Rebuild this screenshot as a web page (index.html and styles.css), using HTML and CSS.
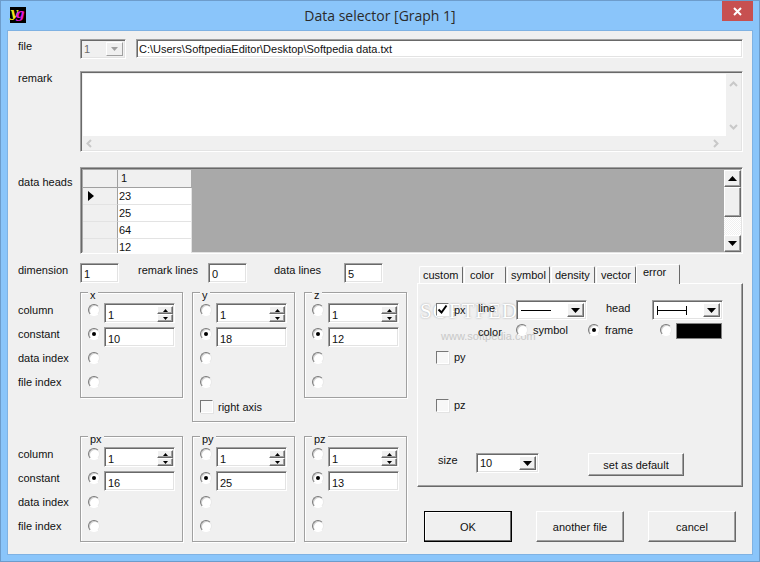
FILE: index.html
```html
<!DOCTYPE html>
<html lang="en">
<head>
<meta charset="utf-8">
<title>Data selector [Graph 1]</title>
<link rel="stylesheet" href="styles.css">
</head>
<body>
<div class="window">
  <header class="titlebar">
    <div class="logo"><span class="logo-y">y</span><span class="logo-g">g</span></div>
    <div class="title">Data selector [Graph 1]</div>
    <div class="close"><svg width="11" height="11" viewBox="0 0 11 11"><path d="M2 2l7 7M9 2l-7 7" stroke="#fff" stroke-width="2" fill="none"/></svg></div>
  </header>
  <main class="client">
    <div class="row row-file">
      <div class="label">file</div>
      <div class="sunken combo combo-file disabled">
        <span class="combo-text">1</span>
        <span class="combo-btn combo-btn-off"><svg width="8" height="5" viewBox="0 0 8 5"><path d="M0 0h7L3.500 4z" fill="#a0a0a0"/></svg></span>
      </div>
      <div class="sunken edit edit-path">C:\Users\SoftpediaEditor\Desktop\Softpedia data.txt</div>
    </div>

    <div class="row row-remark">
      <div class="label">remark</div>
      <div class="sunken memo">
        <div class="memo-text"></div>
        <div class="memo-vbar">
          <svg width="9" height="6" viewBox="0 0 9 6"><path d="M1 5l3.500-3.500L8 5" stroke="#c8c8c8" stroke-width="2" fill="none"/></svg>
          <svg width="9" height="6" viewBox="0 0 9 6"><path d="M1 1l3.500 3.500L8 1" stroke="#c8c8c8" stroke-width="2" fill="none"/></svg>
        </div>
        <div class="memo-hbar">
          <svg width="6" height="9" viewBox="0 0 6 9"><path d="M5 1L1.500 4.500 5 8" stroke="#c8c8c8" stroke-width="2" fill="none"/></svg>
          <svg width="6" height="9" viewBox="0 0 6 9"><path d="M1 1l3.500 3.500L1 8" stroke="#c8c8c8" stroke-width="2" fill="none"/></svg>
        </div>
      </div>
    </div>

    <div class="row row-heads">
      <div class="label">data heads</div>
      <div class="sunken datagrid">
        <div class="grid-table">
          <div class="grid-row grid-head"><div class="g-fixed"></div><div class="g-col g-col-head">1</div></div>
          <div class="grid-row"><div class="g-fixed"><svg width="7" height="10" viewBox="0 0 7 10"><path d="M0 0l6 5-6 5z" fill="#000"/></svg></div><div class="g-col">23</div></div>
          <div class="grid-row"><div class="g-fixed"></div><div class="g-col">25</div></div>
          <div class="grid-row"><div class="g-fixed"></div><div class="g-col">64</div></div>
          <div class="grid-row"><div class="g-fixed"></div><div class="g-col">12</div></div>
        </div>
        <div class="grid-empty"></div>
        <div class="grid-scroll">
          <div class="raised sb-btn"><svg width="9" height="5" viewBox="0 0 9 5"><path d="M4.500 0L9 5H0z" fill="#000"/></svg></div>
          <div class="raised sb-thumb"></div>
          <div class="sb-track"></div>
          <div class="raised sb-btn"><svg width="9" height="5" viewBox="0 0 9 5"><path d="M0 0h9L4.500 5z" fill="#000"/></svg></div>
        </div>
      </div>
    </div>

    <div class="lower">
      <div class="left">
        <div class="counts">
          <div class="label">dimension</div>
          <div class="sunken edit edit-count">1</div>
          <div class="count-label count-remark">remark lines</div>
          <div class="sunken edit edit-count">0</div>
          <div class="count-label count-data">data lines</div>
          <div class="sunken edit edit-count">5</div>
        </div>

        <div class="axes axes-main">
          <div class="axis-labels">
            <div>column</div><div>constant</div><div>data index</div><div>file index</div>
          </div>
          <section class="group">
            <div class="legend">x</div>
            <div class="g-row"><span class="radio"></span><div class="sunken edit spin"><span class="spin-val">1</span><span class="spin-btns"><span class="raised spin-b"><svg width="5" height="3" viewBox="0 0 5 3"><path d="M2.500 0L5 3H0z"/></svg></span><span class="raised spin-b"><svg width="5" height="3" viewBox="0 0 5 3"><path d="M0 0h5L2.500 3z"/></svg></span></span></div></div>
            <div class="g-row"><span class="radio on"></span><div class="sunken edit spin">10</div></div>
            <div class="g-row"><span class="radio"></span></div>
            <div class="g-row"><span class="radio"></span></div>
          </section>
          <section class="group group-tall">
            <div class="legend">y</div>
            <div class="g-row"><span class="radio"></span><div class="sunken edit spin"><span class="spin-val">1</span><span class="spin-btns"><span class="raised spin-b"><svg width="5" height="3" viewBox="0 0 5 3"><path d="M2.500 0L5 3H0z"/></svg></span><span class="raised spin-b"><svg width="5" height="3" viewBox="0 0 5 3"><path d="M0 0h5L2.500 3z"/></svg></span></span></div></div>
            <div class="g-row"><span class="radio on"></span><div class="sunken edit spin">18</div></div>
            <div class="g-row"><span class="radio"></span></div>
            <div class="g-row"><span class="radio"></span></div>
            <div class="g-row"><span class="check"></span><span class="check-text">right axis</span></div>
          </section>
          <section class="group">
            <div class="legend">z</div>
            <div class="g-row"><span class="radio"></span><div class="sunken edit spin"><span class="spin-val">1</span><span class="spin-btns"><span class="raised spin-b"><svg width="5" height="3" viewBox="0 0 5 3"><path d="M2.500 0L5 3H0z"/></svg></span><span class="raised spin-b"><svg width="5" height="3" viewBox="0 0 5 3"><path d="M0 0h5L2.500 3z"/></svg></span></span></div></div>
            <div class="g-row"><span class="radio on"></span><div class="sunken edit spin">12</div></div>
            <div class="g-row"><span class="radio"></span></div>
            <div class="g-row"><span class="radio"></span></div>
          </section>
        </div>

        <div class="axes axes-err">
          <div class="axis-labels">
            <div>column</div><div>constant</div><div>data index</div><div>file index</div>
          </div>
          <section class="group">
            <div class="legend">px</div>
            <div class="g-row"><span class="radio"></span><div class="sunken edit spin"><span class="spin-val">1</span><span class="spin-btns"><span class="raised spin-b"><svg width="5" height="3" viewBox="0 0 5 3"><path d="M2.500 0L5 3H0z"/></svg></span><span class="raised spin-b"><svg width="5" height="3" viewBox="0 0 5 3"><path d="M0 0h5L2.500 3z"/></svg></span></span></div></div>
            <div class="g-row"><span class="radio on"></span><div class="sunken edit spin">16</div></div>
            <div class="g-row"><span class="radio"></span></div>
            <div class="g-row"><span class="radio"></span></div>
          </section>
          <section class="group">
            <div class="legend">py</div>
            <div class="g-row"><span class="radio"></span><div class="sunken edit spin"><span class="spin-val">1</span><span class="spin-btns"><span class="raised spin-b"><svg width="5" height="3" viewBox="0 0 5 3"><path d="M2.500 0L5 3H0z"/></svg></span><span class="raised spin-b"><svg width="5" height="3" viewBox="0 0 5 3"><path d="M0 0h5L2.500 3z"/></svg></span></span></div></div>
            <div class="g-row"><span class="radio on"></span><div class="sunken edit spin">25</div></div>
            <div class="g-row"><span class="radio"></span></div>
            <div class="g-row"><span class="radio"></span></div>
          </section>
          <section class="group">
            <div class="legend">pz</div>
            <div class="g-row"><span class="radio"></span><div class="sunken edit spin"><span class="spin-val">1</span><span class="spin-btns"><span class="raised spin-b"><svg width="5" height="3" viewBox="0 0 5 3"><path d="M2.500 0L5 3H0z"/></svg></span><span class="raised spin-b"><svg width="5" height="3" viewBox="0 0 5 3"><path d="M0 0h5L2.500 3z"/></svg></span></span></div></div>
            <div class="g-row"><span class="radio on"></span><div class="sunken edit spin">13</div></div>
            <div class="g-row"><span class="radio"></span></div>
            <div class="g-row"><span class="radio"></span></div>
          </section>
        </div>
      </div>

      <div class="right">
        <div class="tabs">
          <div class="tab t-custom">custom</div>
          <div class="tab t-color">color</div>
          <div class="tab t-symbol">symbol</div>
          <div class="tab t-density">density</div>
          <div class="tab t-vector">vector</div>
          <div class="tab t-error">error</div>
        </div>
        <div class="panel">
          <div class="watermark"><div class="wm-big">SOFTPEDIA</div><div class="wm-small">www.softpedia.com</div></div>
          <div class="p-row p-line">
            <span class="check checked"><svg width="11" height="11" viewBox="0 0 11 11"><path d="M1.500 5.500l3 3 5-7" stroke="#000" stroke-width="2" fill="none"/></svg></span>
            <span class="p-check-text">px</span>
            <span class="p-name">line</span>
            <div class="sunken combo combo-style">
              <span class="combo-text"><svg width="32" height="3" viewBox="0 0 32 3"><path d="M1 1.500h30" stroke="#000" fill="none"/></svg></span>
              <span class="raised combo-btn"><svg width="9" height="5" viewBox="0 0 9 5"><path d="M0 0h9L4.500 5z" fill="#000"/></svg></span>
            </div>
            <span class="p-head">head</span>
            <div class="sunken combo combo-style">
              <span class="combo-text"><svg width="32" height="9" viewBox="0 0 32 9"><path d="M1.500 0v9M30.500 0v9M1.500 4.500h29" stroke="#000" fill="none"/></svg></span>
              <span class="raised combo-btn"><svg width="9" height="5" viewBox="0 0 9 5"><path d="M0 0h9L4.500 5z" fill="#000"/></svg></span>
            </div>
          </div>
          <div class="p-row p-color">
            <span class="p-color-name">color</span>
            <span class="radio"></span><span class="p-opt p-opt-sym">symbol</span>
            <span class="radio on"></span><span class="p-opt p-opt-frame">frame</span>
            <span class="radio"></span>
            <span class="swatch"></span>
          </div>
          <div class="p-row p-py"><span class="check"></span><span class="p-check-text">py</span></div>
          <div class="p-row p-pz"><span class="check"></span><span class="p-check-text">pz</span></div>
          <div class="p-row p-size">
            <span class="p-size-name">size</span>
            <div class="sunken combo combo-size">
              <span class="combo-text">10</span>
              <span class="raised combo-btn"><svg width="9" height="5" viewBox="0 0 9 5"><path d="M0 0h9L4.500 5z" fill="#000"/></svg></span>
            </div>
            <div class="raised button btn-default">set as default</div>
          </div>
        </div>
        <div class="actions">
          <div class="raised button act act-ok">OK</div>
          <div class="raised button act">another file</div>
          <div class="raised button act">cancel</div>
        </div>
      </div>
    </div>
  </main>
</div>
</body>
</html>
```

FILE: styles.css
```css
* { box-sizing: border-box; }
html, body { margin: 0; padding: 0; }
body {
  width: 760px; height: 562px; overflow: hidden;
  font-family: "Liberation Sans", Arial, sans-serif;
  font-size: 11px; color: #111;
}
svg { display: block; flex: none; }

.window {
  width: 760px; height: 562px;
  background: #8ac5fa;
  border: 1px solid #6d9ccb;
  display: flex; flex-direction: column;
}
.titlebar {
  height: 30px; flex: none;
  display: flex; align-items: flex-start;
  position: relative;
}
.logo {
  position: absolute; left: 9px; top: 6px;
  width: 16px; height: 16px; background: #000;
  font-family: "DejaVu Serif", serif; font-style: italic; font-weight: bold;
  font-size: 13px; line-height: 12px;
  display: flex;
}
.logo-y { color: #f2e61c; margin-left: 0; }
.logo-g { color: #e018d8; margin-left: -2px; margin-top: 1px; }
.title {
  flex: 1; text-align: center;
  font-family: "Open Sans", sans-serif; font-size: 14px;
  line-height: 30px; color: #2a2a2a;
}
.close {
  position: absolute; right: 6px; top: 0;
  width: 31px; height: 20px; background: #c75050;
  display: flex; align-items: center; justify-content: center;
}

.client {
  width: 744px; height: 523px; margin-left: 7px;
  background: #f0f0f0;
  padding: 8px 0 0 10px;
  box-shadow: 0 0 0 1px #7fb2e3;
}

.sunken {
  border: 1px solid; border-color: #a0a0a0 #fff #fff #a0a0a0;
  box-shadow: inset 1px 1px 0 #696969, inset -1px -1px 0 #e3e3e3;
  background: #fff;
}
.raised {
  border: 1px solid; border-color: #fff #696969 #696969 #fff;
  box-shadow: inset -1px -1px 0 #a0a0a0;
  background: #f0f0f0;
}

.row { display: flex; align-items: flex-start; }
.label { width: 62px; flex: none; line-height: 14px; white-space: nowrap; }
.row-file { height: 20px; }
.edit {
  line-height: 14px; padding: 3px 0 0 3px;
  white-space: nowrap; overflow: hidden;
}
.edit-path { width: 607px; height: 19px; margin-left: 10px; padding: 2px 0 0 2px; }

.combo { display: flex; align-items: stretch; padding: 2px; height: 20px; }
.combo-text { flex: 1; line-height: 15px; padding-left: 1px; display: flex; align-items: center; }
.combo-btn { width: 17px; flex: none; display: flex; align-items: center; justify-content: center; }
.combo-file { width: 46px; }
.disabled { background: #f0f0f0; }
.disabled .combo-text { color: #6d6d6d; }
.combo-btn-off { background: #f0f0f0; border: 1px solid; border-color: #fff #a0a0a0 #a0a0a0 #fff; }

.row-remark { margin-top: 12px; }
.memo {
  width: 663px; height: 81px; background: #f0f0f0;
  display: grid; grid-template-columns: 1fr 15px; grid-template-rows: 62px 1fr;
  padding: 2px 1px 1px 2px;
}
.memo-text { background: #fff; }
.memo-vbar {
  grid-row: 1 / 3; grid-column: 2; display: flex; flex-direction: column;
  align-items: center; justify-content: flex-start; gap: 37px; padding-top: 7px;
}
.memo-hbar {
  display: flex; align-items: center; justify-content: space-between;
  padding: 0 7px 0 3px;
}

.row-heads { margin-top: 15px; }
.row-heads .label { margin-top: 8px; }
.datagrid { width: 663px; height: 87px; padding: 2px 1px 1px 2px; display: flex; background: #a9a9a9; overflow: hidden; }
.grid-table { width: 109px; flex: none; background: #a9a9a9; }
.grid-row { display: flex; height: 17px; }
.grid-head { height: 18px; }
.g-fixed {
  width: 35px; flex: none; background: #f0f0f0;
  border-right: 1px solid #a0a0a0; border-bottom: 1px solid #e3e3e3;
  display: flex; align-items: center; padding-left: 5px;
}
.grid-head .g-fixed { border-bottom-color: #a0a0a0; }
.g-col {
  width: 74px; flex: none; background: #fff;
  border-bottom: 1px solid #e3e3e3; border-right: 1px solid #e3e3e3;
  padding-left: 1px; line-height: 17px;
}
.g-col-head { background: #f0f0f0; border-bottom-color: #a0a0a0; border-right-color: #a9a9a9; padding-left: 3px; line-height: 16px; }
.grid-empty { flex: 1; }
.grid-scroll { width: 17px; flex: none; display: flex; flex-direction: column; background: #f0f0f0; }
.sb-btn { height: 17px; flex: none; display: flex; align-items: center; justify-content: center; }
.sb-thumb { height: 30px; flex: none; }
.sb-track {
  flex: 1;
  background: repeating-conic-gradient(#f0f0f0 0 25%, #fff 0 50%) 0 0 / 2px 2px;
}

.lower { display: flex; margin-top: 9px; }
.left { width: 389px; flex: none; }
.right { width: 328px; flex: none; margin-left: 9px; margin-top: 1px; }

.counts { display: flex; align-items: flex-start; height: 20px; }
.edit-count { width: 39px; height: 20px; padding-top: 3px; }
.count-label { flex: none; line-height: 14px; white-space: nowrap; }
.count-remark { margin-left: 19px; width: 70px; }
.count-data { margin-left: 27px; width: 70px; }

.axes { display: flex; align-items: flex-start; gap: 9px; }
.axes-main { margin-top: 9px; height: 130px; }
.axes-err { margin-top: 14px; }
.axis-labels { width: 53px; flex: none; padding-top: 6px; white-space: nowrap; }
.axis-labels div { height: 24px; line-height: 24px; }

.group {
  width: 103px; height: 106px; flex: none;
  border: 1px solid #a0a0a0;
  box-shadow: 1px 1px 0 #fff, inset 1px 1px 0 #fff;
  padding-top: 5px; position: relative;
}
.group-tall { height: 130px; }
.legend {
  position: absolute; left: 7px; top: -4px;
  padding: 0 2px; background: #f0f0f0; line-height: 12px; height: 12px;
}
.g-row { height: 24px; display: flex; align-items: center; padding-left: 7px; }

.radio {
  width: 12px; height: 12px; flex: none; border-radius: 50%;
  background: #fff; border: 1px solid; border-color: #7a7a7a #e8e8e8 #fff #7a7a7a;
  box-shadow: inset 1px 1px 0 #d0d0d0;
  display: flex; align-items: center; justify-content: center;
}
.radio.on::after {
  content: ""; width: 4px; height: 4px; border-radius: 50%; background: #000;
}
.check {
  width: 13px; height: 13px; flex: none; background: #f7f7f7;
  border: 1px solid; border-color: #777 #fff #fff #777;
  box-shadow: 1px 1px 0 #e3e3e3;
  display: block;
}
.check.checked { background: #fff; }
.check-text { margin-left: 5px; padding-top: 2px; }

.spin {
  width: 71px; height: 20px; margin-left: 4px; margin-top: 6px;
  display: flex; align-items: flex-start; padding-top: 4px;
  position: relative;
}
.spin-val { flex: 1; }
.spin-btns {
  position: absolute; right: 1px; top: 2px;
  width: 16px; display: flex; flex-direction: column;
}
.spin-b { height: 8px; display: flex; align-items: center; justify-content: center; }

.tabs { display: flex; align-items: flex-end; height: 19px; padding-left: 3px; position: relative; z-index: 2; }
.tab {
  height: 17px; line-height: 16px; padding-left: 3px; flex: none;
  border: 1px solid #fff; border-right-color: #696969; border-bottom: 0;
  border-radius: 2px 2px 0 0; background: #f0f0f0;
  margin-right: 1px;
}
.t-custom { width: 44px; }
.t-color { width: 42px; padding-left: 5px; }
.t-symbol { width: 43px; }
.t-density { width: 44px; }
.t-vector { width: 40px; margin-right: 0; padding-left: 4px; }
.t-error { width: 44px; height: 20px; padding-left: 6px; line-height: 15px; margin-bottom: -1px; }

.panel {
  width: 326px; height: 204px; margin-left: 1px;
  border: 1px solid; border-color: #fff #696969 #696969 #fff;
  box-shadow: inset -1px -1px 0 #a0a0a0;
  padding: 16px 0 0 18px;
  position: relative;
}
.p-row { display: flex; align-items: flex-start; position: relative; z-index: 1; }
.p-line { height: 20px; align-items: center; }
.p-line .check { margin-top: -2px; }
.p-check-text { margin-left: 5px; width: 24px; line-height: 13px; flex: none; }
.p-name { width: 38px; flex: none; margin-top: -4px; }
.combo-style { width: 71px; }
.p-head { width: 46px; margin-left: 19px; flex: none; margin-top: -4px; }
.p-color { height: 16px; margin-top: 3px; padding-left: 42px; align-items: flex-start; }
.p-color-name { width: 38px; flex: none; line-height: 14px; margin-top: 2px; }
.p-color .radio { margin-top: 1px; }
.p-opt { line-height: 14px; padding-left: 5px; flex: none; }
.p-opt-sym { width: 60px; }
.p-opt-frame { width: 60px; }
.swatch {
  width: 46px; height: 16px; margin-left: 4px; background: #000;
  border: 1px solid #808080;
  flex: none;
}
.p-py { margin-top: 12px; height: 13px; }
.p-pz { margin-top: 35px; height: 13px; }
.p-size { margin-top: 41px; }
.p-size-name { margin-left: 2px; width: 38px; margin-top: 0; flex: none; line-height: 14px; }
.combo-size { width: 63px; }
.button {
  display: flex; align-items: center; justify-content: center;
  box-shadow: inset -1px -1px 0 #a0a0a0;
}
.btn-default { width: 96px; height: 23px; margin-left: 49px; }

.watermark {
  position: absolute; left: 2px; top: 17px;
  white-space: nowrap; pointer-events: none;
}
.wm-big {
  font-family: "Liberation Serif", serif; font-size: 21px; line-height: 20px; letter-spacing: 1px;
  color: #fff; text-shadow: 0 0 2px #999;
}
.wm-small { font-size: 11px; line-height: 12px; margin-left: 21px; margin-top: 9px; color: #c8c8c8; }

.actions { display: flex; gap: 24px; margin-top: 24px; padding-left: 8px; }
.act { width: 88px; height: 31px; }
.act-ok { border: 1px solid #000; box-shadow: inset -1px -1px 0 #696969, inset 1px 1px 0 #fff; }
```
